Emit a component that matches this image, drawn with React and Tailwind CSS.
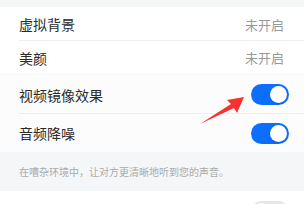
import React from "react";

const font = { fontFamily: '"Noto Sans CJK SC", "Noto Sans", sans-serif' };

function Toggle({ on }) {
  return (
    <div className={`flex h-[21px] w-[38px] items-center rounded-full px-[2px] ${on ? "justify-end bg-[#0d6efd]" : "justify-start bg-[#e5e6e8]"}`}>
      <div className="h-[17px] w-[17px] rounded-full bg-white shadow-sm" />
    </div>
  );
}

function Row({ title, value, toggle, tinted, line, h }) {
  return (
    <div className={`relative flex items-center justify-between pl-[19px] pr-[15px] ${h} ${tinted ? "bg-[#fcfcfc]" : "bg-white"}`}>
      <span className="text-[14px] leading-none text-[#2a2a2a]">{title}</span>
      {value && <span className="pr-[5px] text-[13px] leading-none text-[#999]">{value}</span>}
      {toggle !== undefined && <Toggle on={toggle} />}
      {line && <div className="absolute bottom-0 left-[19px] right-0 h-px bg-[#eeeeee]" />}
    </div>
  );
}

export default function App() {
  return (
    <div className="relative h-[204px] w-[304px] overflow-hidden bg-[#f5f6f7]" style={font}>
      <div className="h-[7px]" />
      <Row title="虚拟背景" value="未开启" line h="h-[34px]" />
      <Row title="美颜" value="未开启" h="h-[33px]" />
      <div className="h-[1px]" />
      <Row title="视频镜像效果" toggle={true} tinted line h="h-[39px]" />
      <Row title="音频降噪" toggle={true} tinted h="h-[38px]" />
      <div className="flex h-[39px] items-center pl-[19px] text-[10px] text-[#aaa]">
        在嘈杂环境中，让对方更清晰地听到您的声音。
      </div>
      <Row title="智能字幕" toggle={false} h="h-[40px]" />
      <svg className="absolute left-0 top-0" width="304" height="204">
        <polygon points="244,97 227,100 231,104 200,124 234,108 237,113" fill="#f7312f" />
      </svg>
    </div>
  );
}
